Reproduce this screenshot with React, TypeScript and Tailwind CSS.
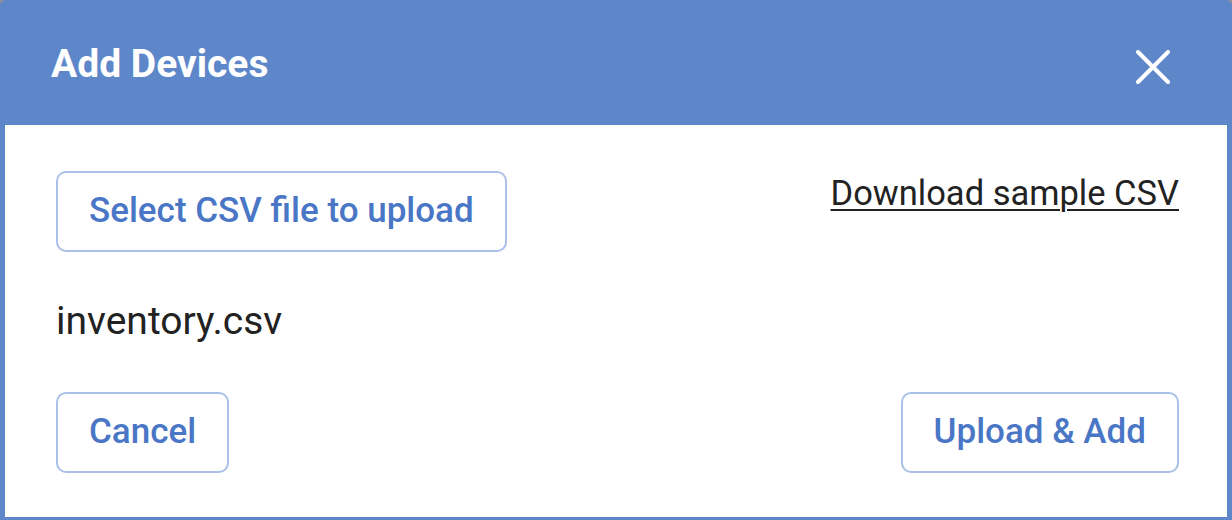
import React from 'react';

const AddDevicesDialog: React.FC = () => {
    return (
        <div className="w-[1232px] h-[520px] bg-[#8a8f99]">
            <div className="h-full flex flex-col bg-[#5e87c9] rounded-t-[6px] px-[5px] pb-[3px] font-['Roboto',sans-serif]">
                {/* Header */}
                <div className="h-[125px] shrink-0 flex items-center justify-between pl-[46px] pr-[54px] pt-[3px]">
                    <h2 className="text-[39px] font-bold text-white leading-none">Add Devices</h2>
                    <button className="w-[40px] h-[40px] mt-[5px] flex items-center justify-center text-white">
                        <svg width="34" height="34" viewBox="0 0 34 34" fill="none" stroke="currentColor" strokeWidth={4} strokeLinecap="round">
                            <path d="M2 2L32 32M32 2L2 32" />
                        </svg>
                    </button>
                </div>

                {/* Body */}
                <div className="flex-1 bg-white flex flex-col pl-[51px] pr-[48px] pt-[46px] pb-[44px]">
                    <div className="flex items-start justify-between">
                        <button className="h-[81px] px-[31px] border-2 border-[#a9c0e8] rounded-[10px] text-[35px] font-medium text-[#4a76c6]">
                            Select CSV file to upload
                        </button>
                        <a href="#" className="-mt-[3px] text-[34.5px] text-[#222] underline underline-offset-[4px] decoration-[2px]">
                            Download sample CSV
                        </a>
                    </div>

                    <p className="mt-[48px] text-[39px] leading-[42px] text-[#222]">inventory.csv</p>

                    <div className="mt-auto flex items-center justify-between">
                        <button className="h-[81px] px-[31px] border-2 border-[#a9c0e8] rounded-[10px] text-[35px] font-medium text-[#4a76c6]">
                            Cancel
                        </button>
                        <button className="h-[81px] px-[31px] border-2 border-[#a9c0e8] rounded-[10px] text-[35px] font-medium text-[#4a76c6]">
                            Upload &amp; Add
                        </button>
                    </div>
                </div>
            </div>
        </div>
    );
};

export default function App() {
    return <AddDevicesDialog />;
}
